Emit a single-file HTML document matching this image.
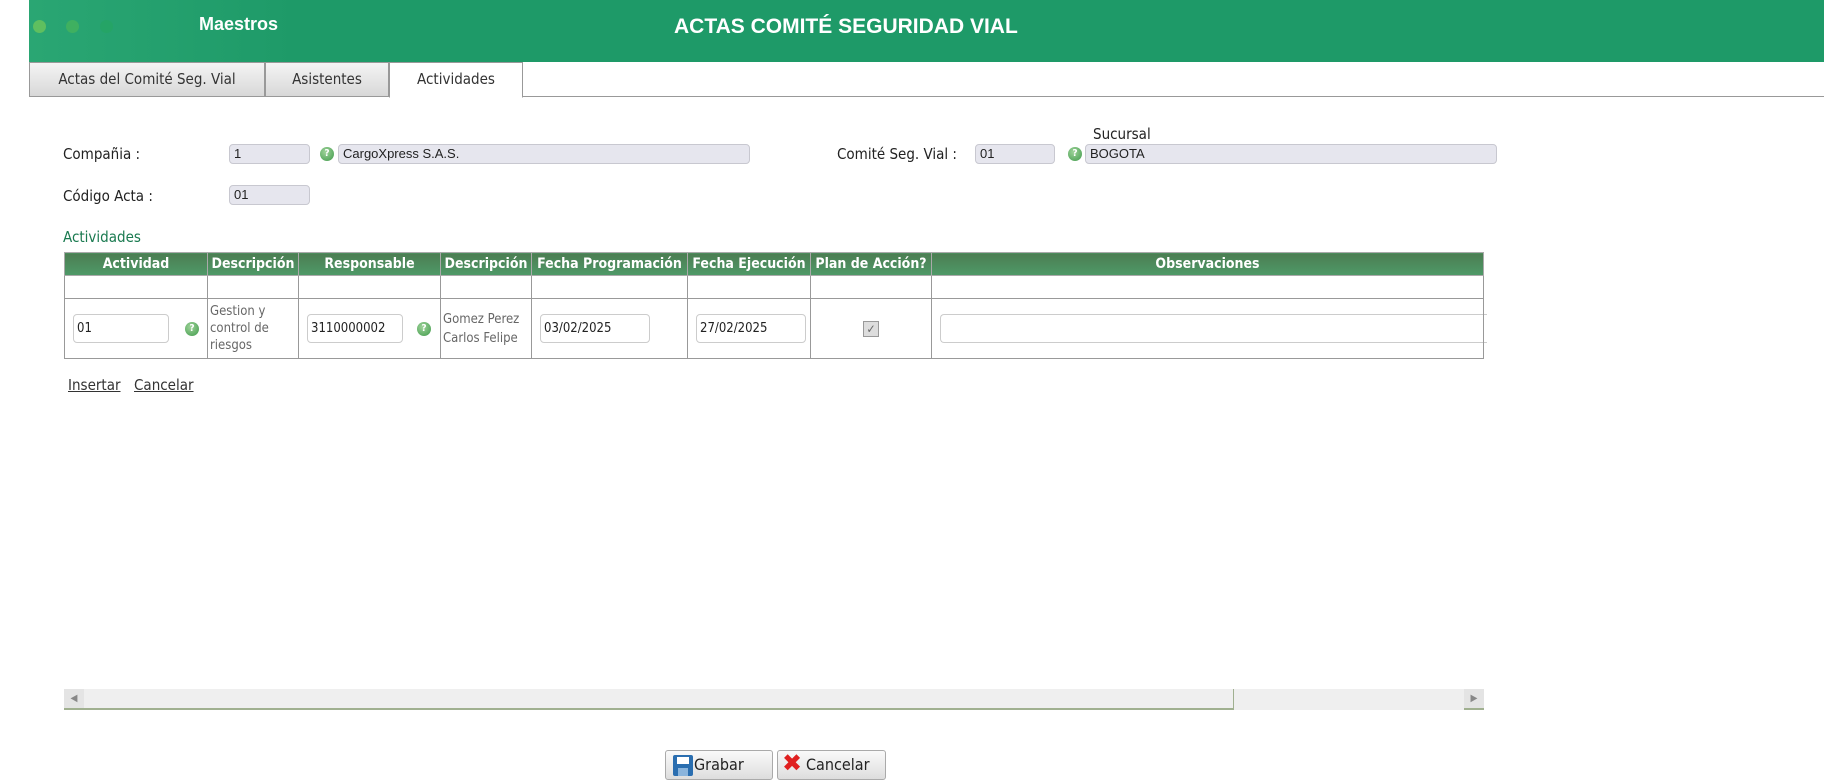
<!DOCTYPE html>
<html><head><meta charset="utf-8"><style>
*{box-sizing:border-box;margin:0;padding:0}
body{width:1824px;height:784px;background:#fff;font-family:"DejaVu Sans Condensed","Liberation Sans",sans-serif;font-size:14px;color:#222;position:relative;overflow:hidden}
.a{position:absolute}
.hdr{left:29px;top:0;width:1795px;height:62px;background:linear-gradient(90deg,#2aa673 0,#1e9a68 15%,#1e9a68 100%)}
.dot{width:13px;height:13px;border-radius:50%;top:20px}
.tabs{left:29px;top:62px;width:1795px;height:35px;border-bottom:1px solid #999}
.tab{top:62px;height:35px;border:1px solid #999;background:linear-gradient(#f4f4f4,#d8d8d8);font-size:15px;text-align:center;line-height:33px;color:#333}
.inp{background:#e6e6ee;border:1px solid #c8c8d0;border-radius:4px;height:20px;font-size:13px;line-height:18px;padding-left:4px;font-family:"Liberation Sans",sans-serif}
.q{width:14px;height:14px;border-radius:50%;background:radial-gradient(circle at 40% 35%,#9fd39a,#3f9a4a);color:#fff;font-size:10px;font-weight:bold;text-align:center;line-height:14px}
.lbl{font-size:15px}
table{border-collapse:collapse;position:absolute;left:64px;top:252px;width:1420px}
th{background:linear-gradient(#4c7d52,#4e9a68);color:#fff;font-size:14px;height:23px;border:1px solid #aaa;padding:0 1px;white-space:nowrap}
td{border:1px solid #999;font-size:13px;color:#666;padding:0 2px}
.ti{border:1px solid #ccc;border-radius:4px;height:29px;font-size:13px;line-height:27px;padding-left:3px;color:#222;background:#fff}
.btn{top:750px;height:30px;border:1px solid #aaa;border-radius:3px;background:linear-gradient(#fafafa,#ddd);font-size:16px;line-height:28px;padding-left:28px;color:#222}
</style></head><body>
<div class="a hdr"></div>
<div class="a dot" style="left:33px;background:#5fbf5f"></div>
<div class="a dot" style="left:66px;background:#3fb060"></div>
<div class="a dot" style="left:100px;background:#25a466"></div>
<div class="a" style="left:199px;top:14px;color:#fff;font-weight:bold;font-size:18px;font-family:'Liberation Sans',sans-serif">Maestros</div>
<div class="a" style="left:674px;top:15px;color:#fff;font-weight:bold;font-size:21px;font-family:'Liberation Sans',sans-serif">ACTAS COMITÉ SEGURIDAD VIAL</div>
<div class="a tabs"></div>
<div class="a tab" style="left:29px;width:236px">Actas del Comité Seg. Vial</div>
<div class="a tab" style="left:265px;width:124px">Asistentes</div>
<div class="a tab" style="left:389px;width:134px;background:#fff;border-bottom-color:#fff;height:36px">Actividades</div>

<div class="a lbl" style="left:63px;top:145px">Compañia :</div>
<div class="a inp" style="left:229px;top:144px;width:81px">1</div>
<div class="a q" style="left:320px;top:147px">?</div>
<div class="a inp" style="left:338px;top:144px;width:412px">CargoXpress S.A.S.</div>
<div class="a lbl" style="left:63px;top:187px">Código Acta :</div>
<div class="a inp" style="left:229px;top:185px;width:81px">01</div>
<div class="a lbl" style="left:1093px;top:125px">Sucursal</div>
<div class="a lbl" style="left:837px;top:145px">Comité Seg. Vial :</div>
<div class="a inp" style="left:975px;top:144px;width:80px">01</div>
<div class="a q" style="left:1068px;top:147px">?</div>
<div class="a inp" style="left:1085px;top:144px;width:412px">BOGOTA</div>
<div class="a" style="left:63px;top:228px;font-size:15px;color:#1a7a50">Actividades</div>

<table>
<tr><th style="width:143px">Actividad</th><th style="width:91px">Descripción</th><th style="width:142px">Responsable</th><th style="width:91px">Descripción</th><th style="width:156px">Fecha Programación</th><th style="width:123px">Fecha Ejecución</th><th style="width:121px">Plan de Acción?</th><th>Observaciones</th></tr>
<tr style="height:23px"><td></td><td></td><td></td><td></td><td></td><td></td><td></td><td></td></tr>
<tr style="height:60px">
<td><div style="display:flex;align-items:center;gap:16px;padding-left:6px"><div class="ti" style="width:96px">01</div><div class="q">?</div></div></td>
<td style="line-height:17px">Gestion y control de riesgos</td>
<td><div style="display:flex;align-items:center;gap:14px;padding-left:6px"><div class="ti" style="width:96px">3110000002</div><div class="q">?</div></div></td>
<td style="line-height:19px">Gomez Perez Carlos Felipe</td>
<td><div class="ti" style="width:110px;margin-left:6px">03/02/2025</div></td>
<td><div class="ti" style="width:110px;margin-left:6px">27/02/2025</div></td>
<td style="text-align:center"><span style="display:inline-block;width:16px;height:16px;border:1px solid #999;background:#ddd;font-size:12px;line-height:14px;color:#666">✓</span></td>
<td><div class="ti" style="width:100%;margin-left:6px;border-right:none;border-radius:4px 0 0 4px"></div></td>
</tr></table>

<div class="a" style="left:68px;top:376px;font-size:15px;text-decoration:underline;color:#333">Insertar</div>
<div class="a" style="left:134px;top:376px;font-size:15px;text-decoration:underline;color:#333">Cancelar</div>

<div class="a" style="left:64px;top:689px;width:1420px;height:21px;background:#efefef"></div>
<div class="a" style="left:84px;top:689px;width:1150px;height:21px;border-bottom:2px solid #a0b090;border-right:1px solid #a0b090"></div>
<div class="a" style="left:64px;top:689px;width:20px;height:21px;background:#e4e4e4;border-bottom:2px solid #a0b090;color:#888;font-size:10px;text-align:center;line-height:20px">◀</div>
<div class="a" style="left:1464px;top:689px;width:20px;height:21px;background:#e4e4e4;border-bottom:2px solid #a0b090;color:#888;font-size:10px;text-align:center;line-height:20px">▶</div>

<div class="a btn" style="left:665px;width:108px">Grabar</div>
<div class="a" style="left:673px;top:755px;width:20px;height:21px;background:#2a6eb0;border-radius:2px"><div style="position:absolute;left:4px;top:2px;width:12px;height:7px;background:#fff"></div><div style="position:absolute;left:5px;top:13px;width:10px;height:8px;background:#8ab4dc"></div></div>
<div class="a btn" style="left:777px;width:109px">Cancelar</div>
<div class="a" style="left:782px;top:749px;color:#e02020;font-size:24px;font-weight:bold;font-family:'DejaVu Sans',sans-serif">✖</div>
</body></html>
